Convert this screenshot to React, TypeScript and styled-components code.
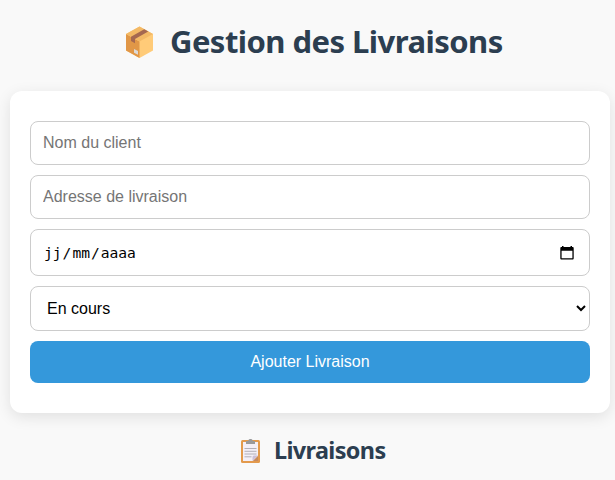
import React from 'react';
import styled, { createGlobalStyle, css } from 'styled-components';

const GlobalStyle = createGlobalStyle`
  * { box-sizing: border-box; }
  html, body { margin: 0; height: 480px; overflow: hidden; background: #f9f9f9; }
`;

const Page = styled.main`
  width: 615px;
  height: 480px;
  padding-left: 10px;
  overflow: hidden;
  background: #f9f9f9;
  color: #2c3e50;
  font-family: "Noto Sans", "Open Sans", sans-serif;
`;

const Title = styled.h1`
  display: flex;
  align-items: center;
  height: 91px;
  margin: 0;
  padding: 0 0 8px 113px;
  font-size: 31px;
  font-weight: 700;
  line-height: 43px;
  white-space: nowrap;
`;

const TitleText = styled.span`
  margin-left: 15px;
  letter-spacing: -0.54px;
`;

const Form = styled.form`
  display: flex;
  flex-direction: column;
  gap: 10px;
  width: 600px;
  height: 322px;
  padding: 30px 20px;
  background: #fff;
  border-radius: 12px;
  box-shadow: 0 4px 15px rgba(0, 0, 0, 0.1);
`;

const field = css`
  width: 100%;
  margin: 0;
  border: 1px solid #ccc;
  border-radius: 8px;
  background: #fff;
  font: 16px "Liberation Sans", Arial, sans-serif;
`;

const TextField = styled.input`
  ${field}
  height: 44px;
  padding: 12px;
  &::placeholder { color: #757575; }
`;

const DateField = styled.div`
  ${field}
  display: flex;
  align-items: center;
  justify-content: space-between;
  height: 47px;
  padding: 0 14px 0 13px;
  color: #000;
`;

const DateText = styled.span`
  display: flex;
  gap: 1px;
  font: 14.6px "DejaVu Sans Mono", monospace;
`;

const StatusSelect = styled.select`
  ${field}
  height: 45px;
  padding: 12px;
  color: #000;
`;

const SubmitButton = styled.button`
  height: 42px;
  padding: 0;
  border: 0;
  border-radius: 8px;
  background: #3498db;
  color: #fff;
  font: 16px "Liberation Sans", Arial, sans-serif;
`;

const Subtitle = styled.h2`
  display: flex;
  align-items: center;
  height: 36px;
  margin: 20px 0 0;
  padding-left: 230px;
  font-size: 23.4px;
  font-weight: 700;
  line-height: 36px;
  white-space: nowrap;
`;

const SubtitleText = styled.span`
  margin: -2px 0 0 12px;
  letter-spacing: -0.62px;
`;

const PackageIcon = () => (
  <svg width="32" height="34" viewBox="0 0 32 34" aria-hidden="true">
    <path d="M3 9 16.5 1.6 30 9v16.5L16.5 33 3 25.5Z" fill="#ffcb78" />
    <path d="M3 9 16.5 16.4V33L3 25.5Z" fill="#e19747" />
    <path d="M3 9 16.5 1.6 30 9 16.5 16.4Z" fill="#f3b966" />
    <path d="m8 11.7 13.2-7.4 4 2.2L12 13.9v4.3l-4-2.3Z" fill="#a56850" />
    <path d="m11 24 4 2v3.8l-4-2.1Z" fill="#dcdad8" />
  </svg>
);

const ClipboardIcon = () => (
  <svg width="22" height="26" viewBox="0 0 22 26" aria-hidden="true">
    <rect x="1" y="2" width="19" height="23" rx="1.5" fill="#e39a4d" />
    <path d="M3 4h15v14l-5 5H3Z" fill="#f3eff8" />
    <path d="M18 18v5h-5Z" fill="#c58a60" />
    <path d="M18 17.5 12.5 23v-4a1.5 1.5 0 0 1 1.5-1.5Z" fill="#cbbfd8" />
    <path d="M6 3h2.2c.3-2.6 4.3-2.6 4.6 0H15v3H6Z" fill="#9a9a9c" />
    <path d="M4.5 10.5h12M4.5 13.3h12M4.5 16h12M4.5 18.8h7" stroke="#b2afb8" strokeWidth="1" />
  </svg>
);

const CalendarIcon = () => (
  <svg width="16" height="16" viewBox="0 0 16 16" aria-hidden="true">
    <path fillRule="evenodd" d="M3 1h1.5v1h7V1H13v1h.5c.8 0 1.2.5 1.2 1.2v10c0 .7-.4 1.3-1.2 1.3h-11c-.7 0-1.2-.6-1.2-1.3v-10C1.3 2.5 1.8 2 2.5 2H3Zm-.4 4.8v7.4h10.8V5.8Z" fill="#000" />
  </svg>
);

export default function App() {
  return (
    <Page>
      <GlobalStyle />
      <Title><PackageIcon /><TitleText>Gestion des Livraisons</TitleText></Title>
      <Form onSubmit={(event) => event.preventDefault()}>
        <TextField placeholder="Nom du client" />
        <TextField placeholder="Adresse de livraison" />
        <DateField>
          <DateText><span>jj</span><span>/</span><span>mm</span><span>/</span><span>aaaa</span></DateText>
          <CalendarIcon />
        </DateField>
        <StatusSelect defaultValue="En cours"><option>En cours</option></StatusSelect>
        <SubmitButton type="submit">Ajouter Livraison</SubmitButton>
      </Form>
      <Subtitle><ClipboardIcon /><SubtitleText>Livraisons</SubtitleText></Subtitle>
    </Page>
  );
}
